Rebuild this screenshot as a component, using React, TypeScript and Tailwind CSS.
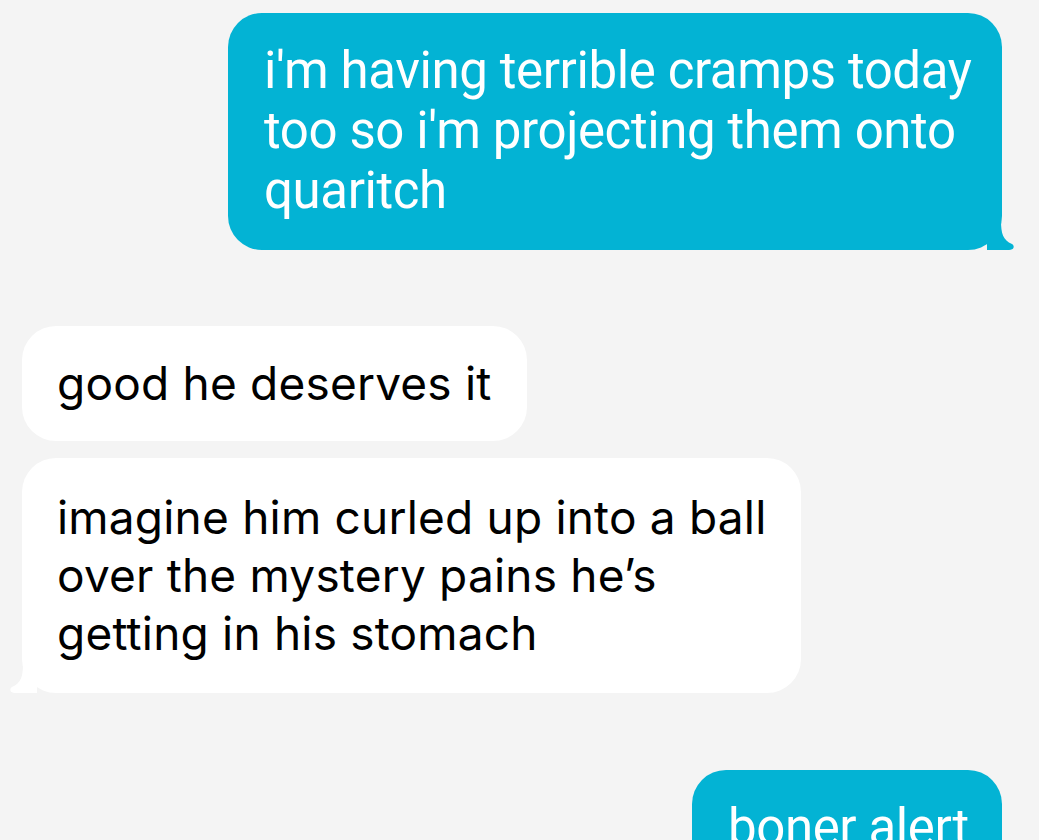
import React from 'react';

type Msg = { from: 'me' | 'them'; lines: string[]; tail?: boolean };

const messages: Msg[] = [
  { from: 'me', lines: ["i'm having terrible cramps today", "too so i'm projecting them onto", 'quaritch'], tail: true },
  { from: 'them', lines: ['good he deserves it'] },
  { from: 'them', lines: ['imagine him curled up into a ball', 'over the mystery pains he\u2019s', 'getting in his stomach'], tail: true },
  { from: 'me', lines: ['boner alert'] },
];

const Tail: React.FC<{ side: 'left' | 'right'; color: string }> = ({ side, color }) => (
  <svg
    width="28"
    height="30"
    viewBox="0 0 28 30"
    className={`absolute bottom-0 ${side === 'right' ? '-right-[13px]' : '-left-[13px] -scale-x-100'}`}
  >
    <path d="M0 0 H14 C14 14 16 20 25 24 C28 26 27 30 22 30 H0 Z" fill={color} />
  </svg>
);

const Bubble: React.FC<{ msg: Msg; className?: string }> = ({ msg, className }) => {
  const mine = msg.from === 'me';
  return (
    <div
      className={`relative rounded-[34px] ${
        mine
          ? 'self-end bg-[#03b3d4] text-white font-["Roboto","Liberation_Sans",sans-serif] text-[51px] leading-[60px] tracking-[-0.4px]'
          : 'self-start bg-white text-black font-["Inter","Noto_Sans",sans-serif] text-[46px] leading-[58px] tracking-[0.2px]'
      } ${className ?? ''}`}
    >
      {msg.lines.map((l, i) => (
        <div key={i} className="whitespace-nowrap">
          {l}
        </div>
      ))}
      {msg.tail && <Tail side={mine ? 'right' : 'left'} color={mine ? '#03b3d4' : '#ffffff'} />}
    </div>
  );
};

export default function App() {
  return (
    <div className="h-[840px] w-full overflow-hidden bg-[#f4f4f4]">
      <div className="flex flex-col">
        <Bubble msg={messages[0]} className="mt-[13px] mr-[37px] w-[774px] pl-[36px] pt-[28px] pb-[29px]" />
        <Bubble msg={messages[1]} className="mt-[76px] ml-[22px] w-[505px] pl-[35px] pt-[28px] pb-[29px]" />
        <Bubble msg={messages[2]} className="mt-[17px] ml-[22px] w-[779px] pl-[35px] pt-[30px] pb-[31px]" />
        <Bubble msg={messages[3]} className="mt-[77px] mr-[37px] w-[310px] pl-[36px] pt-[28px] pb-[29px]" />
      </div>
    </div>
  );
}
